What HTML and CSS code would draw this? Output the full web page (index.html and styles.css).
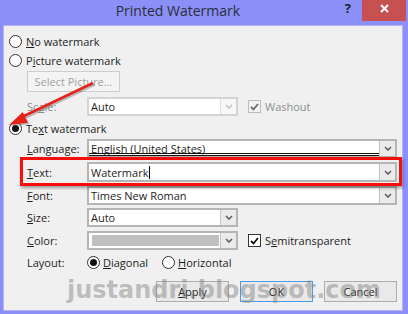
FILE: index.html
```html
<!DOCTYPE html>
<html lang="en">
<head>
    <meta charset="UTF-8">
    <title>Printed Watermark</title>
    <link rel="stylesheet" href="styles.css">
</head>
<body>
    <div class="window">
        <div class="titlebar">
            <span class="title">Printed Watermark</span>
            <span class="help">?</span>
            <span class="close">
                <svg width="9" height="9" viewBox="0 0 9 9"><path d="M1 1L8 8M8 1L1 8" stroke="#fff" stroke-width="2"/></svg>
            </span>
        </div>
        <div class="client">
            <div class="row opt first">
                <span class="radio"></span>
                <span><u>N</u>o watermark</span>
            </div>
            <div class="row opt">
                <span class="radio"></span>
                <span>P<u>i</u>cture watermark</span>
            </div>
            <div class="btn select-pic">Select Picture...</div>
            <div class="row field scale">
                <span class="label disabled">Sc<u>a</u>le:</span>
                <div class="combo short off">
                    <span class="value">Auto</span>
                    <span class="drop"><svg width="8" height="5" viewBox="0 0 8 5"><path d="M1 1L4 4L7 1" fill="none" stroke="#c4c4c4" stroke-width="1.6"/></svg></span>
                </div>
                <span class="check off"><svg width="9" height="8" viewBox="0 0 9 8"><path d="M1 4L3.5 6.5L8 1" fill="none" stroke="#6a6a6a" stroke-width="1.8"/></svg></span>
                <span class="disabled">Washout</span>
            </div>
            <div class="row opt textwm">
                <span class="radio on"></span>
                <span>Te<u>x</u>t watermark</span>
            </div>
            <div class="row field lang">
                <span class="label"><u>L</u>anguage:</span>
                <div class="combo">
                    <span class="value">English (United States)<i class="lines"></i></span>
                    <span class="drop"><svg width="8" height="5" viewBox="0 0 8 5"><path d="M1 1L4 4L7 1" fill="none" stroke="#606060" stroke-width="1.6"/></svg></span>
                </div>
            </div>
            <div class="row field text">
                <span class="label"><u>T</u>ext:</span>
                <div class="combo">
                    <span class="value">Watermark<i class="caret"></i></span>
                    <span class="drop"><svg width="8" height="5" viewBox="0 0 8 5"><path d="M1 1L4 4L7 1" fill="none" stroke="#606060" stroke-width="1.6"/></svg></span>
                </div>
            </div>
            <div class="row field font">
                <span class="label"><u>F</u>ont:</span>
                <div class="combo">
                    <span class="value">Times New Roman</span>
                    <span class="drop"><svg width="8" height="5" viewBox="0 0 8 5"><path d="M1 1L4 4L7 1" fill="none" stroke="#606060" stroke-width="1.6"/></svg></span>
                </div>
            </div>
            <div class="row field size">
                <span class="label"><u>S</u>ize:</span>
                <div class="combo short">
                    <span class="value">Auto</span>
                    <span class="drop"><svg width="8" height="5" viewBox="0 0 8 5"><path d="M1 1L4 4L7 1" fill="none" stroke="#606060" stroke-width="1.6"/></svg></span>
                </div>
            </div>
            <div class="row field color">
                <span class="label"><u>C</u>olor:</span>
                <div class="combo short">
                    <span class="value"><i class="swatch"></i></span>
                    <span class="drop"><svg width="8" height="5" viewBox="0 0 8 5"><path d="M1 1L4 4L7 1" fill="none" stroke="#606060" stroke-width="1.6"/></svg></span>
                </div>
                <span class="check"><svg width="9" height="8" viewBox="0 0 9 8"><path d="M1 4L3.5 6.5L8 1" fill="none" stroke="#111" stroke-width="1.8"/></svg></span>
                <span>S<u>e</u>mitransparent</span>
            </div>
            <div class="row field layout">
                <span class="label">Layout:</span>
                <span class="radio on"></span>
                <span class="opt-text"><u>D</u>iagonal</span>
                <span class="radio"></span>
                <span class="opt-text"><u>H</u>orizontal</span>
            </div>
            <div class="buttons">
                <div class="btn"><u>A</u>pply</div>
                <div class="btn default">OK</div>
                <div class="btn">Cancel</div>
            </div>
        </div>

        <!-- annotations drawn on top of the dialog -->
        <svg class="arrow" width="100" height="130" viewBox="0 0 100 130">
            <g transform="translate(1.5,1.5)" opacity="0.35">
                <path d="M93 83L24 116" stroke="#555" stroke-width="2.5"/>
                <path d="M9 125L22.7 111.9L27.9 122.7Z" fill="#555"/>
            </g>
            <path d="M93 83L24 116" stroke="#e5231b" stroke-width="2.5"/>
            <path d="M9 125L22.7 111.9L27.9 122.7Z" fill="#e5231b"/>
        </svg>
        <div class="highlight"></div>
        <div class="stamp">justandri.blogspot.com</div>
    </div>
</body>
</html>
```

FILE: styles.css
```css
body {
    margin: 0;
    font-family: "Open Sans", "Noto Sans", sans-serif;
    font-size: 11px;
    color: #1e1e1e;
}
u {
    text-decoration-thickness: 1px;
    text-underline-offset: 1px;
}
.window {
    position: relative;
    width: 408px;
    height: 314px;
    box-sizing: border-box;
    padding: 0 5px 3px 3px;
    display: flex;
    flex-direction: column;
    background: #8a90f7;
    overflow: hidden;
}
.titlebar {
    height: 25px;
    flex: none;
    display: flex;
    align-items: flex-start;
}
.title {
    flex: 1;
    text-align: center;
    font-size: 14px;
    line-height: 22px;
    color: #2d2d3a;
    padding-left: 8px;
}
.help {
    font-weight: bold;
    font-size: 13px;
    line-height: 16px;
    color: #222;
    margin-right: 11px;
}
.close {
    width: 44px;
    height: 21px;
    margin-right: -3px;
    background: #c75050;
    display: flex;
    align-items: center;
    justify-content: center;
    padding-bottom: 4px;
    box-sizing: border-box;
}
.client {
    flex: 1;
    background: #f0f0f0;
    border: 1px solid #b3b6f2;
    padding: 0 5px 0 5px;
}
.row {
    display: flex;
    align-items: center;
    height: 19px;
}
.opt.first {
    margin-top: 6px;
}
.opt.textwm {
    margin-top: 3px;
}
.radio {
    width: 13px;
    height: 13px;
    box-sizing: border-box;
    border: 1px solid #333;
    border-radius: 50%;
    background: #fff;
    margin-right: 4px;
    flex: none;
    display: flex;
    align-items: center;
    justify-content: center;
}
.radio.on::after {
    content: "";
    width: 7px;
    height: 7px;
    border-radius: 50%;
    background: #111;
}
.field {
    padding-left: 18px;
}
.label {
    width: 60px;
    flex: none;
}
.disabled {
    color: #8d8d8d;
}
.btn {
    box-sizing: border-box;
    width: 73px;
    height: 21px;
    border: 1px solid #adadad;
    background: #e9e9e9;
    display: flex;
    align-items: center;
    justify-content: center;
}
.btn.select-pic {
    width: 93px;
    margin: 1px 0 0 18px;
    border-color: #cdcdcd;
    background: #f4f4f4;
    color: #a2a2a2;
}
.btn.default {
    border-color: #4a9ee8;
}
.scale {
    margin-top: 5px;
}
.lang {
    margin-top: 1px;
}
.text {
    margin-top: 4px;
    height: 20px;
}
.font, .color {
    margin-top: 4px;
}
.size, .layout {
    margin-top: 3px;
}
.combo {
    flex: 1;
    height: 100%;
    box-sizing: border-box;
    border: 2px solid #b5b5b5;
    background: #fff;
    display: flex;
}
.combo.short {
    flex: none;
    width: 151px;
}
.combo.off {
    border-color: #d4d4d4;
}
.value {
    flex: 1;
    position: relative;
    display: flex;
    align-items: center;
    padding-left: 2px;
}
.drop {
    width: 15px;
    flex: none;
    border-left: 1px solid #c4c4c4;
    background: #ebebeb;
    display: flex;
    align-items: center;
    justify-content: center;
}
.off .drop {
    border-left-color: #dedede;
    background: #f7f7f7;
}
.lines {
    position: absolute;
    left: 0;
    right: 0;
    bottom: 0;
    height: 1px;
    border-top: 1px solid #111;
    border-bottom: 1px solid #111;
}
.caret {
    width: 1px;
    height: 13px;
    background: #000;
    margin-left: 1px;
}
.swatch {
    width: 127px;
    height: 11px;
    background: #c0c0c0;
    margin-left: 1px;
}
.check {
    width: 13px;
    height: 13px;
    box-sizing: border-box;
    border: 1px solid #333;
    background: #fff;
    margin: 0 4px 0 10px;
    display: flex;
    align-items: center;
    justify-content: center;
    flex: none;
}
.check.off {
    border-color: #bcbcbc;
    background: #f3f3f3;
}
.opt-text {
    margin-right: 14px;
}
.layout .radio {
    margin-left: 0;
    margin-right: 3px;
}
.buttons {
    display: flex;
    justify-content: flex-end;
    gap: 11px;
    margin-top: 9px;
}
.arrow {
    position: absolute;
    left: 0;
    top: 0;
}
.highlight {
    position: absolute;
    left: 20px;
    top: 157px;
    width: 382px;
    height: 29px;
    box-sizing: border-box;
    border: 3px solid #f80d0d;
    box-shadow: 1px 2px 3px rgba(0, 0, 0, 0.35);
}
.stamp {
    position: absolute;
    left: 67px;
    top: 276px;
    font-family: "DejaVu Sans", sans-serif;
    font-weight: bold;
    font-size: 24px;
    color: rgba(125, 125, 125, 0.45);
    white-space: nowrap;
}
```
